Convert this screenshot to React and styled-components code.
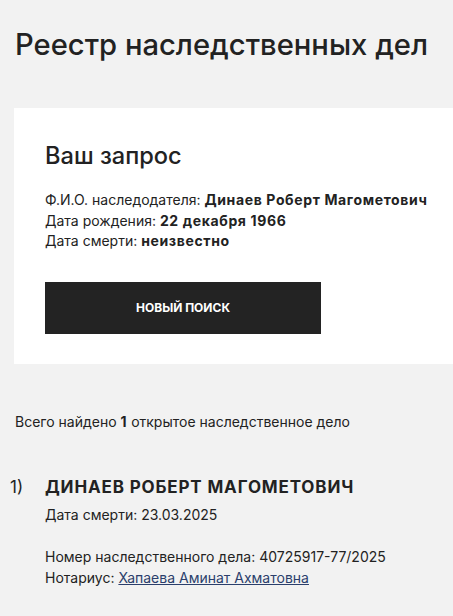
import React from "react";
import styled, { createGlobalStyle } from "styled-components";

const Global = createGlobalStyle`
  html, body { margin: 0; padding: 0; background: #f2f2f2; }
  body { font-family: Inter, "Liberation Sans", Arial, sans-serif; color: #222; }
`;

const Page = styled.div`
  padding: 27px 0 0 14px;
  display: flex;
  flex-direction: column;
`;

const Title = styled.h1`
  margin: 0 0 0 1px;
  font-size: 29.2px;
  line-height: 36px;
  font-weight: 500;
  color: #222;
`;

const Card = styled.section`
  margin-top: 45px;
  background: #fff;
  padding: 35px 0 30px 31px;
  display: flex;
  flex-direction: column;
`;

const CardTitle = styled.h2`
  margin: 0;
  font-size: 23.6px;
  line-height: 26px;
  font-weight: 500;
`;

const Info = styled.div`
  margin-top: 21px;
  font-size: 14px;
  line-height: 20.5px;
`;

const Line = styled.div``;

const Strong = styled.b`
  font-weight: 700;
  letter-spacing: 0.045em;
`;

const Button = styled.button`
  margin-top: 30px;
  width: 276px;
  height: 52px;
  border: 0;
  background: #232323;
  color: #fff;
  font-family: inherit;
  font-size: 12px;
  font-weight: 700;
  text-transform: uppercase;
  cursor: pointer;
`;

const Summary = styled.p`
  margin: 48px 0 0 1px;
  font-size: 14px;
  line-height: 20px;
`;

const Result = styled.div`
  margin-top: 43px;
  display: grid;
  grid-template-columns: 35px 1fr;
  margin-left: -4px;
`;

const Num = styled.div`
  font-size: 17px;
  line-height: 24px;
`;

const ResultBody = styled.div`
  display: flex;
  flex-direction: column;
`;

const Name = styled.div`
  font-size: 17px;
  line-height: 24px;
  font-weight: 700;
  letter-spacing: 0.05em;
  text-transform: uppercase;
`;

const Meta = styled.div`
  font-size: 14px;
  line-height: 21px;
  margin-top: ${(p) => p.$gap || 0}px;
`;

const Link = styled.a`
  color: #2b3f6c;
  text-decoration: underline;
`;

export default function App() {
  return (
    <>
      <Global />
      <Page>
        <Title>Реестр наследственных дел</Title>
        <Card>
          <CardTitle>Ваш запрос</CardTitle>
          <Info>
            <Line>
              Ф.И.О. наследодателя: <Strong>Динаев Роберт Магометович</Strong>
            </Line>
            <Line>
              Дата рождения: <Strong>22 декабря 1966</Strong>
            </Line>
            <Line>
              Дата смерти: <Strong>неизвестно</Strong>
            </Line>
          </Info>
          <div>
            <Button>Новый поиск</Button>
          </div>
        </Card>
        <Summary>
          Всего найдено <Strong>1</Strong> открытое наследственное дело
        </Summary>
        <Result>
          <Num>1)</Num>
          <ResultBody>
            <Name>Динаев Роберт Магометович</Name>
            <Meta $gap={5}>Дата смерти: 23.03.2025</Meta>
            <Meta $gap={21}>Номер наследственного дела: 40725917-77/2025</Meta>
            <Meta>
              Нотариус: <Link href="#">Хапаева Аминат Ахматовна</Link>
            </Meta>
          </ResultBody>
        </Result>
      </Page>
    </>
  );
}
